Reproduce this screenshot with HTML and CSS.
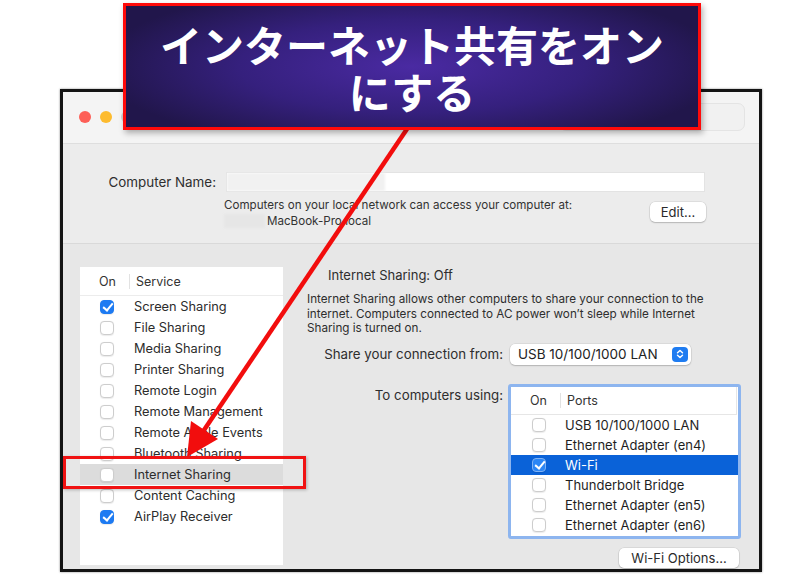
FILE: index.html
```html
<!DOCTYPE html>
<html lang="ja">
<head>
<meta charset="utf-8">
<title>Sharing</title>
<link rel="stylesheet" href="styles.css">
</head>
<body>
<div class="stage">

  <div class="window">
    <div class="titlebar">
      <span class="light red"></span>
      <span class="light yellow"></span>
      <span class="light idle"></span>
      <span class="search"></span>
    </div>

    <section class="identity">
      <div class="name-row">
        <label class="name-label">Computer Name:</label>
        <div class="name-field"><span class="masked wide"></span></div>
      </div>
      <div class="address-row">
        <p class="address">
          <span class="address-line">Computers on your local network can access your computer at:</span>
          <span class="address-line host"><span class="masked"></span>MacBook-Pro.local</span>
        </p>
        <button class="mac-btn edit">Edit...</button>
      </div>
    </section>

    <section class="services">
      <div class="service-list">
        <div class="list-head">
          <span class="col-on">On</span>
          <span class="col-name">Service</span>
        </div>
        <div class="row"><span class="check on"></span><span class="row-name">Screen Sharing</span></div>
        <div class="row"><span class="check"></span><span class="row-name">File Sharing</span></div>
        <div class="row"><span class="check"></span><span class="row-name">Media Sharing</span></div>
        <div class="row"><span class="check"></span><span class="row-name">Printer Sharing</span></div>
        <div class="row"><span class="check"></span><span class="row-name">Remote Login</span></div>
        <div class="row"><span class="check"></span><span class="row-name">Remote Management</span></div>
        <div class="row"><span class="check"></span><span class="row-name">Remote Apple Events</span></div>
        <div class="row"><span class="check"></span><span class="row-name">Bluetooth Sharing</span></div>
        <div class="row current"><span class="check"></span><span class="row-name">Internet Sharing</span></div>
        <div class="row"><span class="check"></span><span class="row-name">Content Caching</span></div>
        <div class="row"><span class="check on"></span><span class="row-name">AirPlay Receiver</span></div>
      </div>

      <div class="detail">
        <div class="status">Internet Sharing: Off</div>
        <p class="about">Internet Sharing allows other computers to share your connection to the<br>internet. Computers connected to AC power won’t sleep while Internet<br>Sharing is turned on.</p>

        <div class="form">
          <span class="form-label">Share your connection from:</span>
          <div class="popup">
            <span>USB 10/100/1000 LAN</span>
            <span class="stepper">
              <svg width="8" height="10" viewBox="0 0 8 10"><path d="M1.5 3.8 4 1.5l2.5 2.3M1.5 6.2 4 8.5l2.5-2.3" fill="none" stroke="#fff" stroke-width="1.4" stroke-linecap="round" stroke-linejoin="round"/></svg>
            </span>
          </div>

          <span class="form-label ports-label">To computers using:</span>
          <div class="ports">
            <div class="list-head">
              <span class="col-on">On</span>
              <span class="col-name">Ports</span>
            </div>
            <div class="row"><span class="check"></span><span class="row-name">USB 10/100/1000 LAN</span></div>
            <div class="row"><span class="check"></span><span class="row-name">Ethernet Adapter (en4)</span></div>
            <div class="row picked"><span class="check on"></span><span class="row-name">Wi-Fi</span></div>
            <div class="row"><span class="check"></span><span class="row-name">Thunderbolt Bridge</span></div>
            <div class="row"><span class="check"></span><span class="row-name">Ethernet Adapter (en5)</span></div>
            <div class="row"><span class="check"></span><span class="row-name">Ethernet Adapter (en6)</span></div>
          </div>
        </div>

        <div class="actions"><button class="mac-btn">Wi-Fi Options...</button></div>
      </div>
    </section>
  </div>

  <!-- annotation layer -->
  <svg class="pointer" width="800" height="574" viewBox="0 0 800 574">
    <line x1="409" y1="126" x2="200" y2="436" stroke="#f20d0d" stroke-width="4.5"/>
    <polygon points="187,457 191,421 218,439" fill="#f20d0d"/>
  </svg>
  <div class="focus-box"></div>
  <div class="callout"><span class="callout-line">インターネット共有をオン</span><span class="callout-line">にする</span></div>

</div>
</body>
</html>
```

FILE: styles.css
```css
* { box-sizing:border-box }
html, body { margin:0; padding:0; background:#fff }
body { font-family:Inter, 'Liberation Sans', sans-serif; color:#2a2a2a; font-size:13px }
p { margin:0 }
button { font:inherit; color:inherit }

.stage { position:relative; width:800px; height:574px; overflow:hidden; padding:89px 0 0 60px }

/* window chrome */
.window { width:702px; height:483px; border:3px solid #141414; background:#ececec; display:flex; flex-direction:column; box-shadow:0 0 2px rgba(0,0,0,.45) }
.titlebar { height:52px; flex:none; display:flex; align-items:flex-start; gap:9px; padding:19px 14px 0 16px; background:#f4f4f4; border-bottom:1px solid #dedede }
.light { width:12px; height:12px; border-radius:50%; flex:none }
.light.red { background:#fd5f57 }
.light.yellow { background:#fdbb2e }
.light.idle { background:#d2d2d2 }
.search { margin-left:auto; margin-top:-8px; width:186px; height:28px; border:1px solid #e4e4e4; border-radius:7px; background:#f1f1f1 }

/* computer name block */
.identity { height:100px; flex:none; padding-top:28px; border-bottom:1px solid #d9d9d9 }
.name-row { display:grid; grid-template-columns:153px 479px; column-gap:10px; align-items:center }
.name-label { text-align:right; font-size:13.4px; color:#2e2e2e }
.name-field { height:20px; background:#fff; border:1px solid #e3e3e3; display:flex }
.masked { display:inline-block; width:41px; height:14px; background:#e6e6e6; filter:blur(1px); vertical-align:middle; margin-right:2px }
.masked.wide { width:158px; height:100%; background:#f1f1f1; margin:0 }
.address-row { display:flex; align-items:flex-start; padding:5px 53px 0 161px }
.address { font-size:11.6px; line-height:16px; color:#333 }
.address-line { display:block; white-space:nowrap }
.host { display:flex; align-items:center }
.mac-btn { height:20px; padding:0 9px; border:none; border-radius:5px; background:#fff; font-size:13px; box-shadow:0 0 0 0.5px rgba(0,0,0,.12), 0 1px 1.5px rgba(0,0,0,.18); line-height:20px }
.edit { margin-left:auto; margin-top:5px; width:56px; padding:0 }

/* services */
.services { flex:1; display:flex; align-items:flex-start; padding:23px 0 0 17px; background:#e7e7e7 }
.service-list { width:203px; height:298px; background:#fff; flex:none }
.list-head { height:29px; display:flex; align-items:center; border-bottom:1px solid #ececec; font-size:12.5px; color:#333 }
.col-on { width:50px; padding-left:19px; border-right:1px solid #e2e2e2; line-height:15px }
.col-name { padding-left:6px }
.row { height:21px; display:flex; align-items:center; padding-left:20px; font-size:12.8px; color:#2c2c2c; white-space:nowrap }
.row-name { margin-left:20px }
.row.current { background:#dcdcdc }

.check { width:14px; height:14px; flex:none; border-radius:4px; background:#fff; border:1px solid #cdcdcd; box-shadow:0 0.5px 1px rgba(0,0,0,.08); position:relative }
.check.on { background:#1d7af2; border-color:#1d7af2 }
.check.on::after { content:''; position:absolute; left:3.5px; top:0.5px; width:4px; height:8px; border:solid #fff; border-width:0 2.2px 2.2px 0; transform:rotate(40deg) }

.detail { width:434px; margin-left:24px; flex:none }
.status { padding-left:21px; line-height:16px; font-size:13px; color:#2e2e2e }
.about { margin-top:9px; font-size:11.7px; line-height:14.5px; color:#2e2e2e; white-space:nowrap }

.form { margin-top:8px; display:grid; grid-template-columns:196px 233px; column-gap:5px; row-gap:19px; align-items:center }
.form-label { text-align:right; font-size:13.3px; color:#2e2e2e }
.popup { width:181px; height:21px; margin-left:2px; background:#fff; border-radius:5px; box-shadow:0 0 0 0.5px rgba(0,0,0,.1), 0 1px 1.5px rgba(0,0,0,.18); display:flex; align-items:center; padding:0 3px 0 8px; font-size:13.5px; color:#222 }
.stepper { margin-left:auto; width:16px; height:15px; border-radius:4px; background:#1f7cf1; display:flex; align-items:center; justify-content:center }
.ports-label { align-self:start; padding-top:3px }
.ports { height:155px; border:3px solid #8db5ef; border-radius:3px; background:#fff }
.ports .list-head { height:28px; border-bottom:1px solid #e6e6e6; border-right:1px solid #e6e6e6; margin-right:1px }
.ports .col-on { width:50px; padding-left:19px }
.ports .row { height:20px; padding-left:21px; font-size:13px; color:#1e1e1e }
.ports .row-name { margin-left:19px }
.row.picked { background:#0a62d8; color:#fff }
.row.picked .check.on { background:#2c86f5; border-color:#7fb2f5 }

.actions { display:flex; justify-content:flex-end; padding:9px 2px 0 0 }
.actions .mac-btn { width:120px; padding:0 }

/* annotation layer */
.pointer { position:absolute; left:0; top:0; pointer-events:none }
.focus-box { position:absolute; left:63px; top:456px; width:243px; height:33px; border:3px solid #f01212; box-shadow:1px 1px 3px rgba(0,0,0,.25) }
.callout { position:absolute; left:123px; top:3px; width:578px; height:127px; border:3px solid #ff0a0a; background:radial-gradient(ellipse 55% 70% at 50% 50%, #4a2aa2 0%, #35207d 55%, #21164b 100%); box-shadow:2px 3px 6px rgba(0,0,0,.3); color:#fff; text-align:center; font-family:'Noto Sans CJK JP', sans-serif; font-weight:700; font-size:42px; padding-top:14px }
.callout-line { display:block; height:47px; line-height:47px }
```
